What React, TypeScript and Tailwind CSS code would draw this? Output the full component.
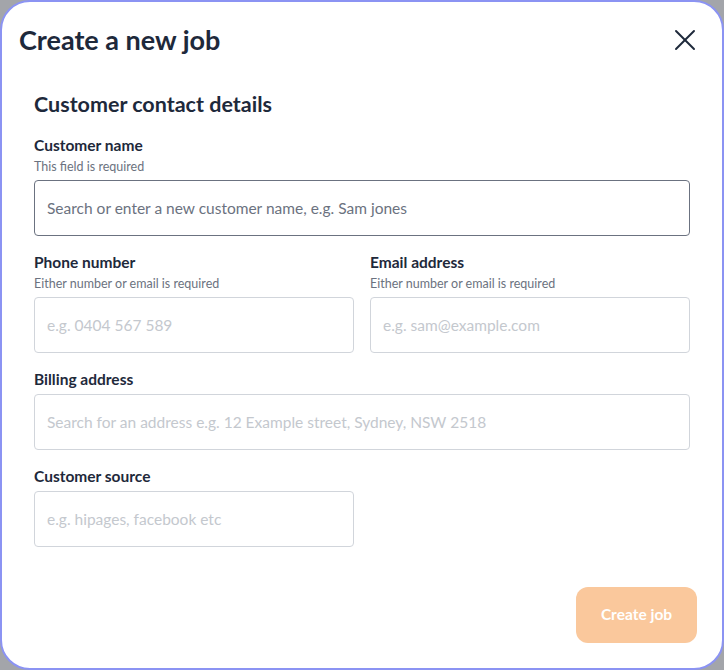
import { X } from "lucide-react";

const font = { fontFamily: "Lato, 'Noto Sans', sans-serif" };

function Field({
  label,
  hint,
  placeholder,
  strong,
}: {
  label: string;
  hint?: string;
  placeholder: string;
  strong?: boolean;
}) {
  return (
    <div className="flex flex-col">
      <label className="text-[15.5px] leading-5 font-bold text-[#1e293b]">{label}</label>
      {hint && <p className="mt-[4px] text-[12.5px] leading-4 text-[#6b7280]">{hint}</p>}
      <input
        placeholder={placeholder}
        className={
          "mt-[5px] h-14 w-full rounded-[4px] border bg-white px-3 text-[15.5px] outline-none " +
          (strong
            ? "border-[#6b7280] placeholder:text-[#6b7280]"
            : "border-[#d1d5db] placeholder:text-[#c4c8ce]")
        }
      />
    </div>
  );
}

export default function App() {
  return (
    <div className="h-[670px] w-[724px] bg-[#a3a5aa]" style={font}>
      <div className="flex h-full flex-col rounded-[30px] border-2 border-[#8b93f3] bg-white">
        <div className="flex items-center justify-between pl-[17px] pr-[19px] pt-5">
          <h1 className="text-[27px] leading-8 font-bold text-[#1e293b]">Create a new job</h1>
          <X size={36} strokeWidth={1.3} className="text-[#1e293b]" />
        </div>

        <div className="flex flex-1 flex-col px-8 pt-8">
          <h2 className="text-[21.5px] leading-7 font-bold text-[#1e293b]">Customer contact details</h2>

          <div className="mt-[17px] flex flex-col gap-4">
            <Field
              label="Customer name"
              hint="This field is required"
              placeholder="Search or enter a new customer name, e.g. Sam jones"
              strong
            />
            <div className="grid grid-cols-2 gap-4">
              <Field
                label="Phone number"
                hint="Either number or email is required"
                placeholder="e.g. 0404 567 589"
              />
              <Field
                label="Email address"
                hint="Either number or email is required"
                placeholder="e.g. sam@example.com"
              />
            </div>
            <Field
              label="Billing address"
              placeholder="Search for an address e.g. 12 Example street, Sydney, NSW 2518"
            />
            <div className="grid grid-cols-2 gap-4">
              <Field label="Customer source" placeholder="e.g. hipages, facebook etc" />
            </div>
          </div>

          <div className="mt-auto flex justify-end pb-[25px]">
            <button className="-mr-[7px] h-14 w-[121px] rounded-[12px] bg-[#fac89c] text-[15.5px] font-bold text-white">
              Create job
            </button>
          </div>
        </div>
      </div>
    </div>
  );
}
